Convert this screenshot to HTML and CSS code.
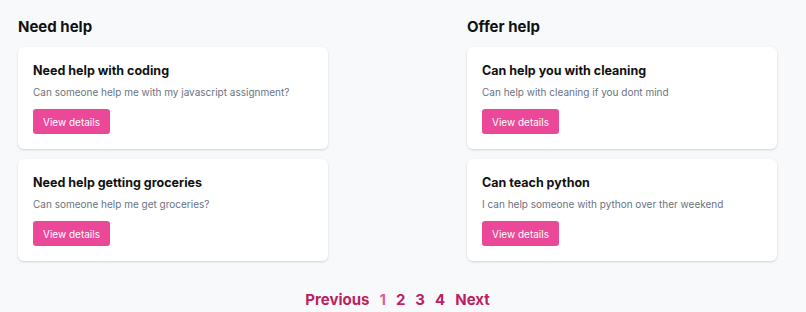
FILE: index.html
```html
<!DOCTYPE html>
<html lang="en">

<head>
  <meta charset="UTF-8">
  <meta name="viewport" content="width=device-width, initial-scale=1.0">
  <title>Help board</title>
  <link rel="stylesheet" href="styles.css">
</head>

<body>
  <div class="board">
    <div class="column">
      <h2 class="column-title">Need help</h2>
      <div class="card">
        <h3 class="card-title">Need help with coding</h3>
        <p class="card-text">Can someone help me with my javascript assignment?</p>
        <button class="btn">View details</button>
      </div>
      <div class="card">
        <h3 class="card-title">Need help getting groceries</h3>
        <p class="card-text">Can someone help me get groceries?</p>
        <button class="btn">View details</button>
      </div>
    </div>
    <div class="column">
      <h2 class="column-title">Offer help</h2>
      <div class="card">
        <h3 class="card-title">Can help you with cleaning</h3>
        <p class="card-text">Can help with cleaning if you dont mind</p>
        <button class="btn">View details</button>
      </div>
      <div class="card">
        <h3 class="card-title">Can teach python</h3>
        <p class="card-text">I can help someone with python over ther weekend</p>
        <button class="btn">View details</button>
      </div>
    </div>
  </div>

  <div class="pager">
    <a href="#" class="page-link">Previous</a>
    <a href="#" class="page-link current">1</a>
    <a href="#" class="page-link">2</a>
    <a href="#" class="page-link">3</a>
    <a href="#" class="page-link">4</a>
    <a href="#" class="page-link">Next</a>
  </div>
</body>

</html>
```

FILE: styles.css
```css
body {
  margin: 0;
  padding: 17px 29px 0 18px;
  background: #f8f9fb;
  font-family: Inter, "Liberation Sans", sans-serif;
  color: #111;
}

.board {
  display: grid;
  grid-template-columns: 310px 310px;
  column-gap: 139px;
}

.column {
  display: flex;
  flex-direction: column;
  gap: 10px;
}

.column-title {
  margin: 0;
  font-size: 15px;
  font-weight: 700;
  line-height: 20px;
}

.card {
  background: #fff;
  border-radius: 6px;
  box-shadow: 0 1px 3px rgba(0, 0, 0, 0.1), 0 1px 2px rgba(0, 0, 0, 0.06);
  padding: 15px;
}

.card-title {
  margin: 0;
  font-size: 12.5px;
  font-weight: 700;
  line-height: 18px;
}

.card-text {
  margin: 4px 0 9px;
  font-size: 10px;
  line-height: 16px;
  color: #6b7280;
}

.btn {
  display: block;
  border: none;
  border-radius: 3px;
  background: #ec4899;
  color: #fff;
  font-family: inherit;
  font-size: 10px;
  height: 25px;
  padding: 0 10px;
}

.pager {
  display: flex;
  justify-content: center;
  gap: 10px;
  margin-top: 29px;
}

.page-link {
  color: #be1f5f;
  font-size: 15px;
  font-weight: 700;
  line-height: 20px;
  text-decoration: none;
}

.page-link.current {
  color: #e15a97;
}
```
